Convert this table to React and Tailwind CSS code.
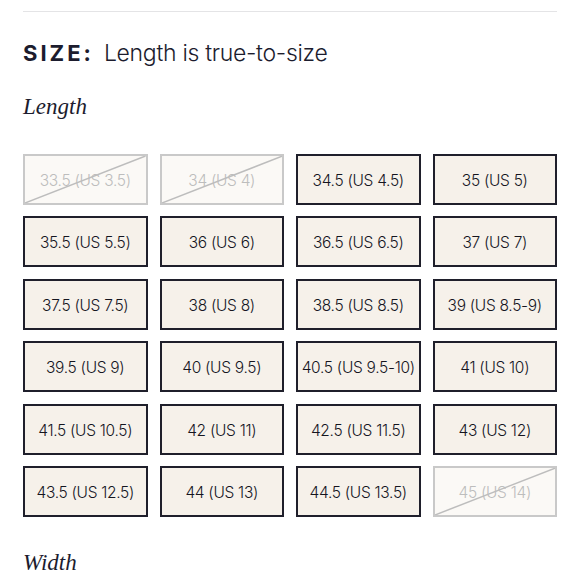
import React from "react";

const sizes = [
  { label: "33.5 (US 3.5)", soldOut: true },
  { label: "34 (US 4)", soldOut: true },
  { label: "34.5 (US 4.5)" },
  { label: "35 (US 5)" },
  { label: "35.5 (US 5.5)" },
  { label: "36 (US 6)" },
  { label: "36.5 (US 6.5)" },
  { label: "37 (US 7)" },
  { label: "37.5 (US 7.5)" },
  { label: "38 (US 8)" },
  { label: "38.5 (US 8.5)" },
  { label: "39 (US 8.5-9)" },
  { label: "39.5 (US 9)" },
  { label: "40 (US 9.5)" },
  { label: "40.5 (US 9.5-10)" },
  { label: "41 (US 10)" },
  { label: "41.5 (US 10.5)" },
  { label: "42 (US 11)" },
  { label: "42.5 (US 11.5)" },
  { label: "43 (US 12)" },
  { label: "43.5 (US 12.5)" },
  { label: "44 (US 13)" },
  { label: "44.5 (US 13.5)" },
  { label: "45 (US 14)", soldOut: true },
];

const SizeButton = ({ label, soldOut }) => {
  if (soldOut) {
    return (
      <button className="relative h-[51px] pt-[3px] border-2 border-[#c9c9c9] bg-[#fbf9f6] text-[15.5px] font-light text-[#bdbdbd] tracking-[-0.3px]">
        {label}
        {/* diagonal strike */}
        <svg
          className="absolute inset-0 w-full h-full"
          preserveAspectRatio="none"
          viewBox="0 0 100 100"
        >
          <line
            x1="0"
            y1="100"
            x2="100"
            y2="0"
            stroke="#bdbdbd"
            strokeWidth="1.5"
            vectorEffect="non-scaling-stroke"
          />
        </svg>
      </button>
    );
  }
  return (
    <button className="h-[51px] pt-[3px] border-2 border-[#1f1f2b] bg-[#f6f1ea] text-[15.5px] font-light text-[#15151f] tracking-[-0.3px]">
      {label}
    </button>
  );
};

export default function App() {
  return (
    <div className="w-[580px] h-[580px] overflow-hidden bg-white px-[23px] pt-[11px] font-['Inter',sans-serif]">
      <div className="h-px bg-[#e4e4e6]" />

      <div className="mt-[24px] flex items-baseline text-[#1c1c2e]">
        <span className="text-[22px] font-bold tracking-[3px]">SIZE:</span>
        <span className="ml-[10px] text-[23px] font-light tracking-[-0.3px]">
          Length is true-to-size
        </span>
      </div>

      <h2 className="mt-[24px] font-['Liberation_Serif',serif] italic text-[23px] text-[#1c1c2e] leading-none">
        Length
      </h2>

      <div className="mt-[36px] grid grid-cols-4 gap-x-[12px] gap-y-[11.5px] w-[534px]">
        {sizes.map((s) => (
          <SizeButton key={s.label} {...s} />
        ))}
      </div>

      <h2 className="mt-[34px] font-['Liberation_Serif',serif] italic text-[23px] text-[#1c1c2e] leading-none">
        Width
      </h2>
    </div>
  );
}
